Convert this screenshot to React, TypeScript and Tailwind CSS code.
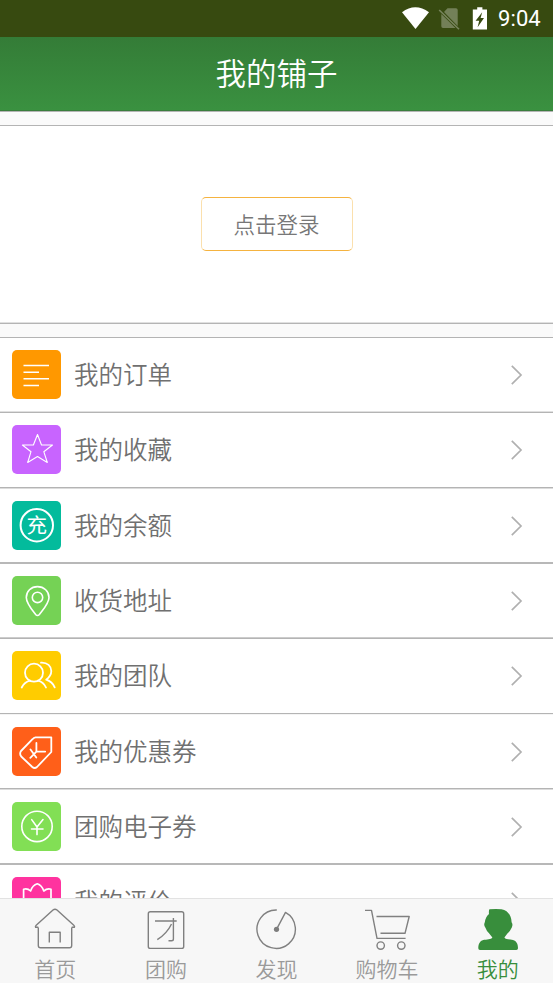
import React from "react";

const cjk = "font-['Noto_Sans_CJK_SC',sans-serif]";

const tile = {
  fill: "none",
  stroke: "white",
  strokeWidth: 1.6,
  strokeLinecap: "round" as const,
  strokeLinejoin: "round" as const,
};

type Row = { label: string; bg: string; height: string; line: string; icon: React.ReactNode };

const rows: Row[] = [
  {
    label: "我的订单",
    bg: "bg-[#ff9800]",
    height: "h-[73px]",
    line: "border-t-[#e0e0e0] border-b-[#b4b4b4]",
    icon: <path d="M11.5 15.5H37M11.5 22.2H27M11.5 28.8H37M11.5 35.5H27" strokeLinecap="butt" />,
  },
  {
    label: "我的收藏",
    bg: "bg-[#c864ff]",
    height: "h-[74px]",
    line: "border-t-[#b4b4b4] border-b-[#dcdcdc]",
    icon: (
      <path
        strokeWidth="1.1"
        d="M25.5 9.5L29.5 20H40.5L31.8 26.7L35.3 37.5L25.5 31.5L15.7 37.5L19 26.7L10.4 20H21.4Z"
      />
    ),
  },
  {
    label: "我的余额",
    bg: "bg-[#03bb9c]",
    height: "h-[73px]",
    line: "border-t-[#b8b8b8] border-b-[#b8b8b8]",
    icon: (
      <>
        <circle cx="24.8" cy="24.2" r="16.2" strokeWidth="2" />
        <text x="24.8" y="32" textAnchor="middle" fontSize="20.5" fill="white" stroke="none" className={`${cjk} font-normal`}>
          充
        </text>
      </>
    ),
  },
  {
    label: "收货地址",
    bg: "bg-[#75d255]",
    height: "h-[73px]",
    line: "border-t-[#cccccc] border-b-[#b4b4b4]",
    icon: (
      <>
        <path d="M25.5 10.6C19 10.6 14.3 15.4 14.3 21.4C14.3 27 19 32.5 23.6 38.4Q25.5 40.6 27.4 38.4C32 32.5 37 27 37 21.4C37 15.4 32 10.6 25.5 10.6Z" />
        <circle cx="25.5" cy="21.4" r="5.2" />
      </>
    ),
  },
  {
    label: "我的团队",
    bg: "bg-[#ffcc00]",
    height: "h-[74px]",
    line: "border-t-[#b4b4b4] border-b-[#f4f4f4]",
    icon: (
      <>
        <circle cx="22" cy="21.7" r="9" strokeWidth="1.8" />
        <path
          strokeWidth="1.8"
          d="M9.7 36.5Q12.5 31 18.2 29.7M25.8 29.7Q31.5 31 34 36.5M29 11.6C35.5 11.2 39.3 15.4 39.3 20C39.3 23.8 37 26.6 34.2 28.7C38.2 30 41 32.4 42.7 36.3"
        />
      </>
    ),
  },
  {
    label: "我的优惠券",
    bg: "bg-[#ff5f19]",
    height: "h-[73px]",
    line: "border-t-[#b4b4b4] border-b-[#dcdcdc]",
    icon: (
      <path
        strokeWidth="1.8"
        d="M23.5 10.3H39.3V25L25 40Q22.6 42 20.3 40L9.2 29.5Q7.2 26.8 9 24L20.5 12.2Q21.8 10.5 23.5 10.3ZM24.4 16V24.6H33.2M24.4 24.6L18.3 30.8M18.5 22.5L24.3 30.5"
      />
    ),
  },
  {
    label: "团购电子券",
    bg: "bg-[#82df55]",
    height: "h-[73px]",
    line: "border-t-[#b8b8b8] border-b-[#b8b8b8]",
    icon: (
      <>
        <circle cx="25" cy="24.4" r="15.2" />
        <path d="M19.7 17.6L25 25L31 17.6M25 25V32.6M19.5 27H31" />
      </>
    ),
  },
  {
    label: "我的评价",
    bg: "bg-[#ff339f]",
    height: "h-[73px]",
    line: "border-t-[#b4b4b4] border-b-[#dcdcdc]",
    icon: (
      <path d="M11.6 36V12.2Q15.5 11 18.6 14Q20.5 8.2 25.3 6.8Q29.8 8.2 31.8 14Q35.2 11 39 12.2V36Z" strokeWidth="1.7" />
    ),
  },
];

const tabs = [
  {
    label: "首页",
    icon: (
      <path d="M5.3 20.5V38.5Q5.3 40.7 7.5 40.7H36.5Q38.7 40.7 38.7 38.5V20.5M5.3 20.3H2.6Q2 19.3 3.2 18.2L20 3Q22 1.4 24 3L40.8 18.2Q42 19.3 41.4 20.3H38.7M16.3 35.5V25.2H27.2V35.5" />
    ),
  },
  {
    label: "团购",
    icon: (
      <>
        <rect x="4.3" y="4.8" width="35.4" height="36.6" rx="2" />
        <path d="M11 14H32.7M29.4 11V32Q29.4 33.8 27.6 33.8H24.5M27.5 17Q23 26.5 13.3 32.7" />
      </>
    ),
  },
  {
    label: "发现",
    icon: (
      <>
        <path d="M22.8 3A19.2 19.2 0 1 0 31.5 5.4L22.5 22.3" />
        <circle cx="22.5" cy="22.3" r="2.6" fill="#7d7d7d" stroke="none" />
      </>
    ),
  },
  {
    label: "购物车",
    icon: (
      <>
        <path d="M0 3.4H6.5L12 31.4H40.6M11.5 9.5H44.2L40 26.3H15.5" />
        <circle cx="15.7" cy="38.6" r="3.7" />
        <circle cx="36.3" cy="38.6" r="3.7" />
      </>
    ),
  },
  {
    label: "我的",
    active: true,
    icon: (
      <path
        fill="#388e3c"
        stroke="none"
        d="M13.4 2.2Q20 1.6 25.5 2.2C31.5 3.2 35.4 8 35.6 15.2Q37.2 17.6 35.8 20.4Q33.8 24.6 31.4 26.5L28.4 30.5C29.6 32.5 33.5 32.4 37 33C40.5 34 42 37 42 41.2Q42 43 40.3 43H4Q2.3 43 2.3 41.2C2.3 37 3.8 34 7.2 33C10.8 32.4 15 32.5 16.4 30.5L13.2 26.5Q10.4 23.6 9.3 20.4Q7.4 18 8.8 15.2C9.2 11.5 10.8 9 13 7Q12.6 4 13.4 2.2Z"
      />
    ),
  },
];

function StatusBar() {
  return (
    <div className="flex h-[37px] shrink-0 items-center bg-[#374a10] pl-[402px] text-white">
      <svg className="h-[37px] w-[90px] shrink-0" viewBox="0 0 90 37">
        <path d="M0 12.2Q13.3 2.4 27 12.2L13.5 29Z" fill="white" />
        <path
          d="M45.5 8.3H54Q55.7 8.3 55.7 10V26L42 12ZM39.3 14V26.3Q39.3 28 41 28H53.5Z"
          fill="white"
          fillOpacity=".3"
        />
        <path d="M37.2 10L57 29.2" stroke="white" strokeOpacity=".32" strokeWidth="1.6" />
        <path d="M70.8 9.5H75.2V7.3H80.4V9.5H85V29.5H70.8Z" fill="white" />
        <path d="M80.2 12.3L73.6 20.8H77.2L75.6 27.2L82 18H78.6Z" fill="#374a10" />
      </svg>
      <span className="ml-[6px] font-[Roboto] text-[22px] font-normal leading-none tracking-[0.1px]">9:04</span>
    </div>
  );
}

export default function App() {
  return (
    <div className={`flex h-[983px] w-[553px] flex-col overflow-hidden bg-white font-[350] ${cjk}`}>
      <StatusBar />
      <header className="flex h-[74px] shrink-0 items-center justify-center border-b border-[#3a7d3d] bg-linear-to-b from-[#347c37] to-[#3a9140] pb-[2px] text-[30.5px] text-white">
        我的铺子
      </header>
      <div className="h-[15px] shrink-0 border-y border-[#b4b4b4] bg-[#fafafa]" />
      <section className="flex h-[196px] shrink-0 items-center justify-center">
        <button className="flex h-[54px] w-[152px] items-center justify-center rounded-[5px] border border-x-[#fbe0ad] border-y-[#f5b340] text-[21.5px] text-[#777]">
          点击登录
        </button>
      </section>
      <div className="h-4 shrink-0 border-t border-[#e0e0e0]">
        <div className="h-[15px] border-y border-[#b4b4b4] bg-[#fafafa]" />
      </div>
      <main className="min-h-0 flex-1 overflow-hidden">
        {rows.map((row) => (
          <React.Fragment key={row.label}>
            <div className={`flex items-start pl-3 pr-[30px] pt-3 ${row.height}`}>
              <div className={`size-[49px] shrink-0 rounded-[5px] ${row.bg}`}>
                <svg viewBox="0 0 49 49" className="size-[49px]" {...tile}>
                  {row.icon}
                </svg>
              </div>
              <span className="ml-[13px] flex-1 text-[24.5px] leading-[47px] text-[#707070]">{row.label}</span>
              <svg viewBox="0 0 12 20" className="mt-[15px] h-5 w-3" fill="none" stroke="#b0b0b0" strokeWidth="1.7">
                <path d="M.8 .8L10 10L.8 19.2" />
              </svg>
            </div>
            <div className={`h-[2px] border-y ${row.line}`} />
          </React.Fragment>
        ))}
      </main>
      <nav className="grid h-[85px] shrink-0 grid-cols-5 border-t border-[#e2e2e2] bg-[#f7f7f7]">
        {tabs.map((tab) => (
          <div key={tab.label} className="flex flex-col items-center pt-2">
            <svg
              viewBox="0 0 44 44"
              className="h-11 w-11 shrink-0 overflow-visible"
              fill="none"
              stroke="#808080"
              strokeWidth="1.4"
              strokeLinejoin="round"
            >
              {tab.icon}
            </svg>
            <span className={`mt-[3px] text-[21px] leading-7 ${tab.active ? "text-[#388e3c]" : "text-[#9a9a9a]"}`}>
              {tab.label}
            </span>
          </div>
        ))}
      </nav>
    </div>
  );
}
